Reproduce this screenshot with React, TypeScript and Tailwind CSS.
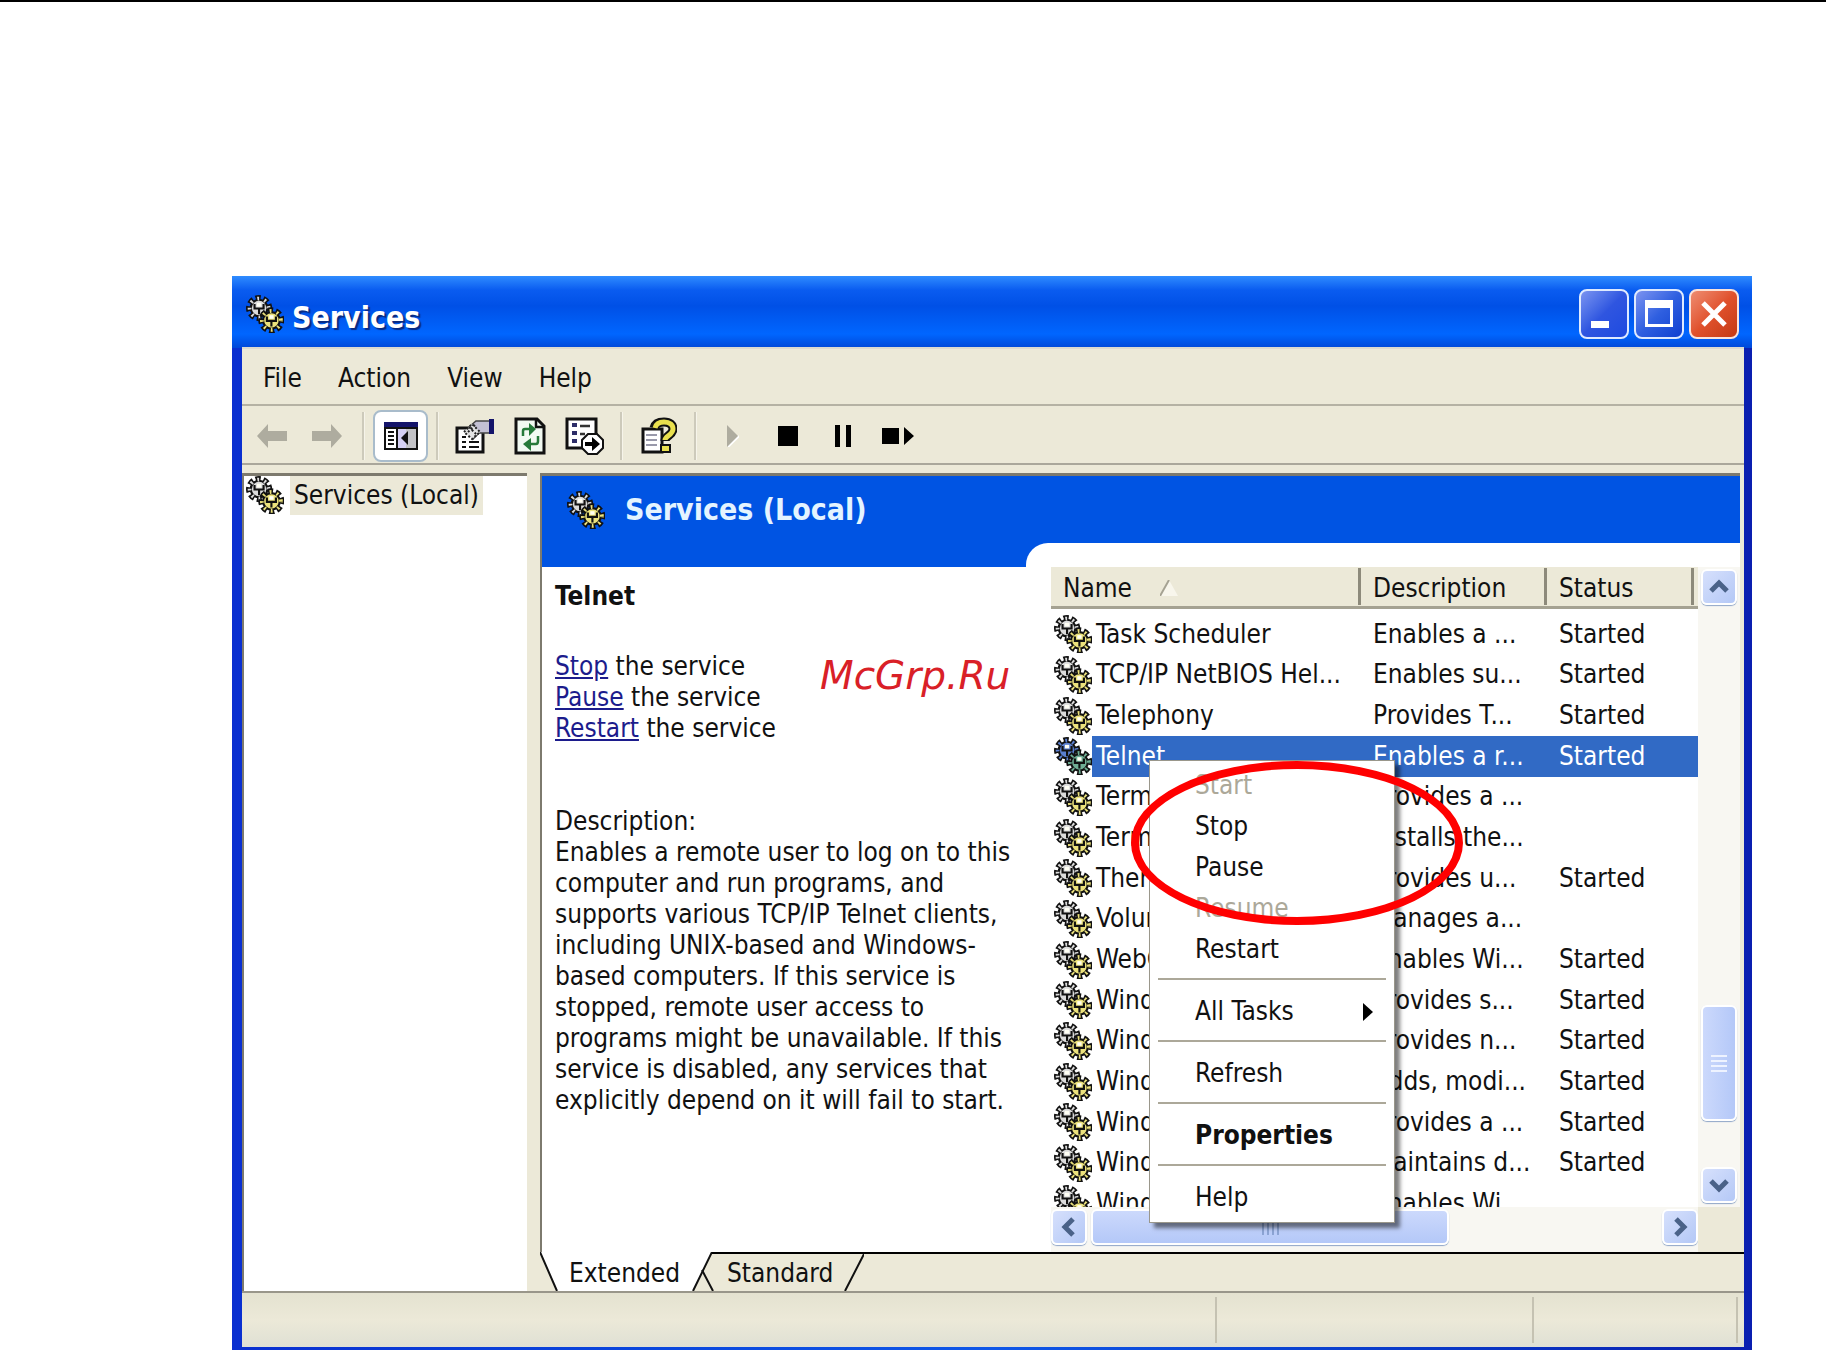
import type { ReactNode } from 'react'

type ServiceType = {
  name: string;
  description: string;
  started?: boolean;
  selected?: boolean;
};

const services: ServiceType[] = [
  { name: 'Task Scheduler', description: 'Enables a ...', started: true },
  { name: 'TCP/IP NetBIOS Hel...', description: 'Enables su...', started: true },
  { name: 'Telephony', description: 'Provides T...', started: true },
  { name: 'Telnet', description: 'Enables a r...', started: true, selected: true },
  { name: 'Terminal', description: 'Provides a ...' },
  { name: 'Terminal', description: 'Installs the...' },
  { name: 'Themes', description: 'Provides u...', started: true },
  { name: 'Volume', description: 'Manages a...' },
  { name: 'WebClient', description: 'Enables Wi...', started: true },
  { name: 'Windows', description: 'Provides s...', started: true },
  { name: 'Windows', description: 'Provides n...', started: true },
  { name: 'Windows', description: 'Adds, modi...', started: true },
  { name: 'Windows', description: 'Provides a ...', started: true },
  { name: 'Windows', description: 'Maintains d...', started: true },
  { name: 'Windows', description: 'Enables Wi...' },
];

type GearProps = { cx: number; cy: number; color: string };

function Gear({ cx, cy, color }: GearProps) {
  return (
    <g fill="none">
      <circle cx={cx} cy={cy} r="4.3" stroke="#111" strokeWidth="2.4" pathLength="16" strokeDasharray="1.3 0.7" strokeDashoffset="0.65" />
      <circle cx={cx} cy={cy} r="3.5" fill={color} stroke="#111" strokeWidth="0.9" />
      <circle cx={cx} cy={cy} r="4" stroke={color} strokeWidth="1.6" pathLength="16" strokeDasharray="0.5 1.5" strokeDashoffset="0.25" />
      <path d={`M${cx - 1.9} ${cy - 1.7}v1.9h3.8v-1.9M${cx} ${cy}v2.6`} stroke="#111" strokeWidth="0.9" />
      <path d={`M${cx - 0.9} ${cy - 2.2}h1.8v1.5h-1.8z`} fill="#fffff4" />
    </g>
  );
}

function GearsIcon({ selected = false }: { selected?: boolean }) {
  return (
    <svg viewBox="0 0 16 16" className="size-[38px] shrink-0" aria-hidden="true">
      <Gear cx={5.5} cy={5.5} color={selected ? '#5a7fd0' : '#dcdcdc'} />
      <Gear cx={10.7} cy={10.7} color={selected ? '#6fae94' : '#ece27c'} />
    </svg>
  );
}

function ToolButton({ label, active, disabled, children }: { label: string; active?: boolean; disabled?: boolean; children: ReactNode }) {
  return (
    <button
      type="button"
      aria-label={label}
      disabled={disabled}
      className={
        active
          ? 'flex h-[52px] w-[55px] items-center justify-center rounded-lg border-2 border-[#a9bccb] bg-white'
          : 'flex h-[52px] w-[55px] items-center justify-center'
      }
    >
      {children}
    </button>
  );
}

function ToolDivider() {
  return <div className="mx-[8px] h-[48px] w-[3px] border-l-2 border-[#cdcabb] bg-[#f6f4ea]" />;
}

function Toolbar() {
  return (
    <div className="flex h-[59px] items-center border-b-2 border-[#aaa79b] pt-[2px] pl-[2px]" role="toolbar">
      <ToolButton label="Back" disabled>
        <svg viewBox="0 0 30 24" className="h-6 w-[30px]">
          <path d="M0 12L11 0v7h19v10H11v7z" fill="#aeac9f" />
        </svg>
      </ToolButton>
      <ToolButton label="Forward" disabled>
        <svg viewBox="0 0 30 24" className="h-6 w-[30px]">
          <path d="M30 12L19 0v7H0v10h19v7z" fill="#aeac9f" />
        </svg>
      </ToolButton>
      <ToolDivider />
      <ToolButton label="Show/Hide Console Tree" active>
        <svg viewBox="0 0 34 30" className="h-[30px] w-[34px]">
          <path d="M0 1h34v28H0z" fill="#111" />
          <path d="M0 1h34v5H0z" fill="#14146a" />
          <path d="M2 8h10v19H2z" fill="#fff" />
          <path d="M14 8h8v19h-8z" fill="#d5d0f4" />
          <path d="M22 8h10v19H22z" fill="#c2c2c6" />
          <path d="M4 11h6M4 15h6M4 19h6M4 23h6" stroke="#111" strokeWidth="2" />
          <path d="M17 17l7-7v14z" fill="#111" />
        </svg>
      </ToolButton>
      <ToolDivider />
      <ToolButton label="Properties">
        <svg viewBox="0 0 40 36" className="h-9 w-10">
          <path d="M2 10h26v24H2z" fill="#fff" stroke="#111" strokeWidth="3" />
          <path d="M7 24h4M14 24h10M7 29h4M14 29h10M7 19h4" stroke="#111" strokeWidth="2" />
          <path d="M14 9l7-6h14v12H24l-6 6z" fill="#c3c0d3" stroke="#444" strokeWidth="1.5" />
          <path d="M9 14l8-8 8 8-8 7z" fill="#e4e4e4" stroke="#222" strokeWidth="2" strokeDasharray="2 2" />
          <path d="M13 14l7-7M14 9l8 8" stroke="#222" strokeWidth="2" strokeDasharray="2 2" />
          <path d="M34 1h5v15h-5z" fill="#14146a" />
        </svg>
      </ToolButton>
      <ToolButton label="Refresh">
        <svg viewBox="0 0 32 38" className="h-[38px] w-8">
          <path d="M2 2h21l7 7v27H2z" fill="#f2faf2" stroke="#111" strokeWidth="3" />
          <path d="M22 2v8h8" fill="none" stroke="#111" strokeWidth="2.5" />
          <path d="M9 19v-5q0-2 2-2h5" fill="none" stroke="#267a3a" strokeWidth="2.5" />
          <path d="M15 6l7 6-7 7z" fill="#267a3a" />
          <path d="M24 19v5q0 3-2 3h-6" fill="none" stroke="#267a3a" strokeWidth="2.5" />
          <path d="M17 21v13l-8-7z" fill="#267a3a" />
        </svg>
      </ToolButton>
      <ToolButton label="Export List">
        <svg viewBox="0 0 40 38" className="h-[38px] w-10">
          <path d="M2 2h29v29H2z" fill="#fff" stroke="#111" strokeWidth="3" />
          <path d="M7 6h5v4H7zM7 14h5v4H7zM7 22h5v4H7z" fill="#2d2d68" />
          <path d="M15 9h10M15 17h5" stroke="#333" strokeWidth="2.5" />
          <path d="M23 17h9l6 6v8l-6 6h-9l-6-6v-8z" fill="#fff" stroke="#111" strokeWidth="2" />
          <path d="M20 25h7v-5l8 7-8 7v-5h-7z" fill="#000" />
        </svg>
      </ToolButton>
      <ToolDivider />
      <ToolButton label="Help">
        <svg viewBox="0 0 36 38" className="h-[38px] w-9">
          <path d="M2 12h19v23H2z" fill="#fff" stroke="#111" strokeWidth="3" />
          <path d="M5 18h11M5 23h11M5 28h11" stroke="#99a" strokeWidth="2" />
          <path d="M13 11c1-4 5-6 10-6 6 0 9 3 9 7 0 6-8 7-8 12" fill="none" stroke="#111" strokeWidth="9" />
          <path d="M14 11c1-4 4-6 9-6 6 0 9 3 9 7 0 6-8 7-8 11" fill="none" stroke="#e9e04e" strokeWidth="5" />
          <path d="M20 28h9v7h-9z" fill="#e9e04e" stroke="#111" strokeWidth="2" />
        </svg>
      </ToolButton>
      <ToolDivider />
      <ToolButton label="Start Service" disabled>
        <svg viewBox="0 0 12 22" className="h-[22px] w-3">
          <path d="M1 22L12 11" stroke="#fff" strokeWidth="2" />
          <path d="M0 0l11 11L0 22z" fill="#aeac9f" />
        </svg>
      </ToolButton>
      <ToolButton label="Stop Service">
        <span className="size-5 bg-black" />
      </ToolButton>
      <ToolButton label="Pause Service">
        <span className="h-[22px] w-4 border-x-5 border-black" />
      </ToolButton>
      <ToolButton label="Restart Service">
        <svg viewBox="0 0 32 18" className="h-[18px] w-8">
          <path d="M0 1h17v16H0zM22 0l10 9-10 9z" />
        </svg>
      </ToolButton>
    </div>
  );
}

function TitleBar() {
  return (
    <header className="flex h-[71px] items-center pt-1 pr-[5px] pl-[4px]">
      <GearsIcon />
      <h1 className="mt-2 ml-2 flex-1 text-[30px] font-bold text-white [text-shadow:2px_2px_1px_#0a2a80]">Services</h1>
      <div className="flex gap-[5px]">
        <button type="button" aria-label="Minimize" className="flex size-[50px] rounded-lg border-2 border-[#dfeaff] bg-linear-to-br from-[#7c93f0] via-[#2f55e0] to-[#1d4ae0]">
          <span className="mt-[30px] ml-[10px] h-[7px] w-[18px] bg-white" />
        </button>
        <button type="button" aria-label="Maximize" className="flex size-[50px] items-center justify-center rounded-lg border-2 border-[#dfeaff] bg-linear-to-br from-[#7c93f0] via-[#2f5fe0] to-[#0f3fd0]">
          <span className="h-[27px] w-[28px] border-3 border-t-8 border-white" />
        </button>
        <button type="button" aria-label="Close" className="flex size-[50px] items-center justify-center rounded-lg border-2 border-[#fbe3da] bg-linear-to-br from-[#ee8c70] via-[#e0512c] to-[#c33a14]">
          <svg viewBox="0 0 28 28" className="size-7">
            <path d="M3 3l22 22M25 3L3 25" stroke="#fff" strokeWidth="5" />
          </svg>
        </button>
      </div>
    </header>
  );
}

function ScrollButton({ label, path }: { label: string; path: string }) {
  return (
    <button type="button" aria-label={label} className="flex size-[36px] shrink-0 items-center justify-center rounded-md border-2 border-white bg-linear-to-br from-[#d6e0fc] to-[#b4c8f6] shadow-[0_1px_1px_#8fa6c8]">
      <svg viewBox="0 0 20 20" className="size-5">
        <path d={path} fill="none" stroke="#4a6288" strokeWidth="5" />
      </svg>
    </button>
  );
}

function ServicesTable() {
  return (
    <table className="h-[657px] w-full table-fixed border-collapse text-left">
      <thead>
        <tr className="h-[40px]">
          <th className="w-[310px] border-b-3 border-[#a5a292] bg-[#ece9d8] p-0 font-normal">
            <div className="flex h-[37px] items-center border-r-3 border-[#8d8a7b] pt-1 pl-3">
              Name
              <svg viewBox="0 0 18 16" className="ml-7 h-4 w-[18px]">
                <path d="M9 0l9 16H0z" fill="#f8f6ec" />
                <path d="M0 16L9 0" stroke="#a5a292" strokeWidth="2" />
              </svg>
            </div>
          </th>
          <th className="w-[186px] border-b-3 border-[#a5a292] bg-[#ece9d8] p-0 font-normal">
            <div className="flex h-[37px] items-center border-r-3 border-[#8d8a7b] pt-1 pl-3">Description</div>
          </th>
          <th className="border-b-3 border-[#a5a292] bg-[#ece9d8] p-0 pr-1 font-normal">
            <div className="flex h-[37px] items-center border-r-3 border-[#8d8a7b] pt-1 pl-3">Status</div>
          </th>
        </tr>
        <tr className="h-[7px]" />
      </thead>
      <tbody>
        {services.map((service, idx) => (
          <tr key={idx} className={service.selected ? 'text-white' : ''}>
            <td className="h-px overflow-hidden p-0">
              <div className="flex h-full items-center pl-[3px]">
                <GearsIcon selected={service.selected} />
                <span className={service.selected ? 'flex h-full flex-1 items-center bg-[#316ac5] pl-1' : 'pl-1 whitespace-nowrap'}>
                  {service.name}
                </span>
              </div>
            </td>
            <td className={service.selected ? 'bg-[#316ac5] p-0 pl-3' : 'p-0 pl-3'}>
              <div className="whitespace-nowrap">{service.description}</div>
            </td>
            <td className={service.selected ? 'bg-[#316ac5] p-0 pl-3' : 'p-0 pl-3'}>{service.started ? 'Started' : ''}</td>
          </tr>
        ))}
      </tbody>
    </table>
  );
}

function MenuItem({ children, disabled, bold, submenu }: { children: ReactNode; disabled?: boolean; bold?: boolean; submenu?: boolean }) {
  return (
    <button
      type="button"
      role="menuitem"
      disabled={disabled}
      className={`flex h-[41px] w-full items-center justify-between pl-[45px] pr-[21px] text-left disabled:text-[#aca899] ${bold ? 'font-bold' : ''}`}
    >
      {children}
      {submenu && (
        <svg viewBox="0 0 10 18" className="h-[18px] w-[10px]">
          <path d="M0 0l10 9-10 9z" />
        </svg>
      )}
    </button>
  );
}

function MenuDivider() {
  return <hr className="mx-2 mt-[8px] mb-[11px] border-t-2 border-[#aca899]" />;
}

function ContextMenu() {
  return (
    <div role="menu" className="absolute top-[217px] left-[123px] w-[246px] border border-[#9a978b] bg-white py-[4px] shadow-[5px_5px_4px_#00000080]">
      <MenuItem disabled>Start</MenuItem>
      <MenuItem>Stop</MenuItem>
      <MenuItem>Pause</MenuItem>
      <MenuItem disabled>Resume</MenuItem>
      <MenuItem>Restart</MenuItem>
      <MenuDivider />
      <MenuItem submenu>All Tasks</MenuItem>
      <MenuDivider />
      <MenuItem>Refresh</MenuItem>
      <MenuDivider />
      <MenuItem bold>Properties</MenuItem>
      <MenuDivider />
      <MenuItem>Help</MenuItem>
    </div>
  );
}

function ServiceList() {
  return (
    <div className="relative grid min-w-0 flex-1 grid-cols-[1fr_42px] rounded-tl-[22px] bg-white pt-6 pl-[25px]">
      <div className="h-[640px] overflow-hidden">
        <ServicesTable />
      </div>
      <div className="flex flex-col items-center bg-[#f8f7f2] pt-[2px]">
        <ScrollButton label="Scroll up" path="M2 14l8-8 8 8" />
        <div className="flex-1" />
        <div className="flex h-[116px] w-[36px] flex-col items-center justify-center gap-[3px] rounded-md border-2 border-white bg-linear-to-r from-[#ccd9fc] to-[#b4c8f8] shadow-[0_1px_1px_#8fa6c8]">
          <span className="h-[2px] w-4 bg-[#eef3ff]" />
          <span className="h-[2px] w-4 bg-[#eef3ff]" />
          <span className="h-[2px] w-4 bg-[#eef3ff]" />
          <span className="h-[2px] w-4 bg-[#eef3ff]" />
        </div>
        <div className="h-[46px]" />
        <ScrollButton label="Scroll down" path="M2 6l8 8 8-8" />
        <div className="h-1" />
      </div>
      <div className="flex h-[45px] items-start gap-1 bg-[#f8f7f2] pt-[2px]">
        <ScrollButton label="Scroll left" path="M14 2l-8 8 8 8" />
        <div className="flex h-[36px] w-[358px] items-center justify-center gap-[3px] rounded-md border-2 border-white bg-linear-to-b from-[#ccd9fc] to-[#b4c8f8] shadow-[0_1px_1px_#8fa6c8]">
          <span className="h-4 w-[2px] bg-[#8ca4d4]" />
          <span className="h-4 w-[2px] bg-[#8ca4d4]" />
          <span className="h-4 w-[2px] bg-[#8ca4d4]" />
          <span className="h-4 w-[2px] bg-[#8ca4d4]" />
        </div>
        <div className="flex-1" />
        <ScrollButton label="Scroll right" path="M6 2l8 8-8 8" />
      </div>
      <div className="bg-[#ece9d8]" />
      <ContextMenu />
      <div className="pointer-events-none absolute top-[218px] left-[105px] h-[164px] w-[332px] rounded-[50%] border-8 border-[#ff0000]" />
    </div>
  );
}

function ServiceDetails() {
  return (
    <div className="relative w-[484px] pt-6">
      <div className="h-full bg-white pt-[14px] pr-2 pl-[13px] leading-[31px]">
        <h3 className="font-bold">Telnet</h3>
        <ul className="mt-[39px]">
          <li><a href="#stop" className="text-[#1c1c8c] underline">Stop</a> the service</li>
          <li><a href="#pause" className="text-[#1c1c8c] underline">Pause</a> the service</li>
          <li><a href="#restart" className="text-[#1c1c8c] underline">Restart</a> the service</li>
        </ul>
        <p className="mt-[62px]">Description:</p>
        <p>
          Enables a remote user to log on to this computer and run programs, and supports various TCP/IP Telnet clients,
          including UNIX-based and Windows-based computers. If this service is stopped, remote user access to programs
          might be unavailable. If this service is disabled, any services that explicitly depend on it will fail to start.
        </p>
      </div>
      <p className="absolute top-[104px] left-[278px] font-['DejaVu_Sans',sans-serif] text-[39px] text-[#d92027] italic">McGrp.Ru</p>
    </div>
  );
}

function ViewTabs() {
  return (
    <div role="tablist" className="flex h-[39px]">
      <button type="button" role="tab" aria-selected="true" className="relative flex h-full w-[172px] items-center pt-1 pl-[29px]">
        <svg viewBox="0 0 172 39" className="absolute inset-0 h-full w-full">
          <path d="M0 0h172l-19 39H17z" fill="#fff" />
          <path d="M0 0l17 39M172 0l-19 39" fill="none" stroke="#111" strokeWidth="2" />
        </svg>
        <span className="relative">Extended</span>
      </button>
      <button type="button" role="tab" aria-selected="false" className="relative flex h-full w-[152px] items-center border-t-2 border-black pt-[2px] pl-[15px]">
        <svg viewBox="0 0 172 37" className="absolute top-0 -left-5 h-full w-[172px]">
          <path d="M10 16l11 21M172 0l-19 37" fill="none" stroke="#111" strokeWidth="2" />
        </svg>
        <span className="relative">Standard</span>
      </button>
      <div className="flex-1 border-t-2 border-black" />
    </div>
  );
}

export default function App() {
  return (
    <main className="border-t-2 border-black bg-white font-['DejaVu_Sans_Condensed','DejaVu_Sans',sans-serif] text-[26px] text-[#111]">
      <section className="mt-[274px] mr-[74px] ml-[232px] bg-linear-to-r from-[#0a2fd0] via-[#0f57e8] to-[#0a1fb0]">
        <div className="bg-[linear-gradient(to_bottom,#2f8cff_0px,#0a5cf0_14px,#0050e6_30px,#0066ff_58px,#0048d8_72px,transparent_72px)] pr-2 pb-[3px] pl-[10px]">
          <TitleBar />
          <div className="border-t-2 border-[#dcdad0] bg-[#ece9d8]">
            <nav className="flex h-[57px] items-center gap-9 border-b-2 border-[#b5b2a4] pt-1 pl-[21px]">
              <button type="button">File</button>
              <button type="button">Action</button>
              <button type="button">View</button>
              <button type="button">Help</button>
            </nav>
            <Toolbar />
            <div className="flex pt-[8px]">
              <aside className="flex w-[285px] items-start border-t-3 border-l-2 border-[#7d7a6e] bg-white pl-[2px]">
                <GearsIcon />
                <button type="button" className="ml-[6px] bg-[#ece9d8] px-1 leading-[39px] whitespace-nowrap">Services (Local)</button>
              </aside>
              <div className="ml-[13px] min-w-0 flex-1">
                <div className="mr-[4px] border-t-3 border-l-2 border-[#7d7a6e] bg-[#0054e3]">
                  <div className="flex h-[67px] items-center pl-[25px]">
                    <GearsIcon />
                    <h2 className="ml-5 text-[30px] font-bold text-[#e4f4ff]">Services (Local)</h2>
                  </div>
                  <div className="flex">
                    <ServiceDetails />
                    <ServiceList />
                  </div>
                </div>
                <ViewTabs />
              </div>
            </div>
            <footer className="flex h-[56px] border-t-2 border-[#99968a] bg-linear-to-b from-[#e4e2d0] via-[#ece9d8] to-[#dfe0d4] py-1">
              <div className="flex-1 border-r-2 border-[#c5c2b2]" />
              <div className="w-[317px] border-r-2 border-[#c5c2b2]" />
              <div className="mr-[6px] w-[204px] border-r-2 border-[#c5c2b2]" />
            </footer>
          </div>
        </div>
      </section>
    </main>
  );
}
